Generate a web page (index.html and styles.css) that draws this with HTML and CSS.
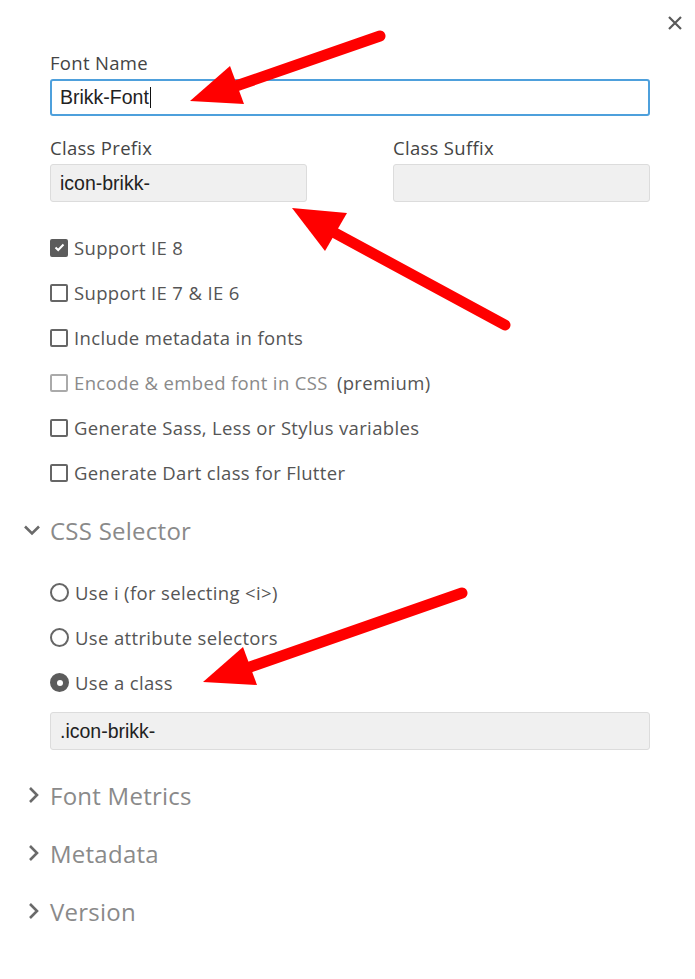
FILE: index.html
```html
<!DOCTYPE html>
<html>
<head>
<meta charset="utf-8">
<link rel="stylesheet" href="styles.css">
</head>
<body>
<div class="dialog">
  <button class="close" aria-label="Close">
    <svg width="16" height="16" viewBox="0 0 16 16"><path d="M2 2L14 14M14 2L2 14" stroke="#5a5a5a" stroke-width="2.2" fill="none"/></svg>
  </button>

  <div class="field">
    <label class="label">Font Name</label>
    <div class="input focus"><span>Brikk-Font</span><span class="caret"></span></div>
  </div>

  <div class="row2">
    <div class="field">
      <label class="label">Class Prefix</label>
      <div class="input">icon-brikk-</div>
    </div>
    <div class="field">
      <label class="label">Class Suffix</label>
      <div class="input"></div>
    </div>
  </div>

  <ul class="checks">
    <li class="opt"><span class="box checked"><svg width="11" height="9" viewBox="0 0 11 9"><path d="M1.5 4.5L4.2 7L9.5 1.5" stroke="#fff" stroke-width="2" fill="none"/></svg></span>Support IE 8</li>
    <li class="opt"><span class="box"></span>Support IE 7 &amp; IE 6</li>
    <li class="opt"><span class="box"></span>Include metadata in fonts</li>
    <li class="opt disabled"><span class="box"></span>Encode &amp; embed font in CSS <span class="premium">(premium)</span></li>
    <li class="opt"><span class="box"></span>Generate Sass, Less or Stylus variables</li>
    <li class="opt"><span class="box"></span>Generate Dart class for Flutter</li>
  </ul>

  <section class="acc open">
    <div class="acc-head">
      <svg class="chev down" width="18" height="12" viewBox="0 0 18 12"><path d="M2 2.5L9 9.5L16 2.5" stroke="#6a6a6a" stroke-width="2.6" fill="none"/></svg>
      <span>CSS Selector</span>
    </div>
    <ul class="radios">
      <li class="opt"><span class="radio"></span>Use i (for selecting &lt;i&gt;)</li>
      <li class="opt"><span class="radio"></span>Use attribute selectors</li>
      <li class="opt"><span class="radio on"></span>Use a class</li>
    </ul>
    <div class="input">.icon-brikk-</div>
  </section>

  <section class="acc">
    <div class="acc-head">
      <svg class="chev right" width="14" height="18" viewBox="0 0 14 18"><path d="M3 2L10 9L3 16" stroke="#6a6a6a" stroke-width="2.6" fill="none"/></svg>
      <span>Font Metrics</span>
    </div>
  </section>
  <section class="acc">
    <div class="acc-head">
      <svg class="chev right" width="14" height="18" viewBox="0 0 14 18"><path d="M3 2L10 9L3 16" stroke="#6a6a6a" stroke-width="2.6" fill="none"/></svg>
      <span>Metadata</span>
    </div>
  </section>
  <section class="acc">
    <div class="acc-head">
      <svg class="chev right" width="14" height="18" viewBox="0 0 14 18"><path d="M3 2L10 9L3 16" stroke="#6a6a6a" stroke-width="2.6" fill="none"/></svg>
      <span>Version</span>
    </div>
  </section>

  <svg class="arrows" width="695" height="979" viewBox="0 0 695 979">
    <g stroke="#ff0000" stroke-width="11" stroke-linecap="round" fill="none">
      <line x1="380" y1="36" x2="236" y2="86"/>
      <line x1="505" y1="325" x2="335" y2="233"/>
      <line x1="462" y1="593" x2="250" y2="667"/>
    </g>
    <g fill="#ff0000">
      <polygon points="190,101 230,66 244,104"/>
      <polygon points="292,208 347,213 325,251"/>
      <polygon points="203,682 243,647 257,685"/>
    </g>
  </svg>
</div>
</body>
</html>
```

FILE: styles.css
```css
* { box-sizing: border-box; }
html, body { margin: 0; padding: 0; background: #fff; }
body { width: 695px; height: 979px; overflow: hidden; }

.dialog {
  position: relative;
  width: 695px;
  height: 979px;
  padding: 52px 45px 0 50px;
  font-family: "Open Sans", "Noto Sans", sans-serif;
  color: #555;
}

.close {
  position: absolute;
  top: 14px;
  right: 11px;
  width: 18px;
  height: 18px;
  padding: 0;
  border: 0;
  background: none;
  display: flex;
  align-items: center;
  justify-content: center;
}

.field { display: flex; flex-direction: column; }
.label {
  font-size: 18.5px;
  letter-spacing: 0.3px;
  line-height: 22px;
  color: #444;
  margin-bottom: 5px;
}

.input {
  height: 38px;
  border: 1px solid #dcdcdc;
  border-radius: 3px;
  background: #f0f0f0;
  font-family: "Liberation Sans", Arial, sans-serif;
  font-size: 19.5px;
  color: #222;
  padding: 0 9px;
  display: flex;
  align-items: center;
}
.input.focus {
  height: 37px;
  background: #fff;
  border: 2px solid #4ea0dc;
  padding: 0 8px;
}
.caret {
  display: inline-block;
  width: 1px;
  height: 21px;
  background: #111;
  margin-left: 1px;
}

.row2 {
  display: grid;
  grid-template-columns: 257px 257px;
  justify-content: space-between;
  margin-top: 21px;
}

.checks, .radios { list-style: none; margin: 0; padding: 0; }
.checks { margin-top: 23px; }

.opt {
  height: 45px;
  display: flex;
  align-items: center;
  font-size: 18.5px;
  letter-spacing: 0.35px;
  color: #555;
  white-space: pre;
}
.opt.disabled { color: #8a8a8a; }
.opt .premium { color: #555; margin-left: 4px; }

.box {
  width: 18px;
  height: 18px;
  border: 2px solid #666;
  border-radius: 2px;
  margin-right: 6px;
  display: flex;
  align-items: center;
  justify-content: center;
  flex: none;
}
.opt.disabled .box { border-color: #aaa; }
.box.checked { background: #5c5c5c; border-color: #5c5c5c; }

.acc-head {
  position: relative;
  height: 40px;
  display: flex;
  align-items: center;
  font-size: 24px;
  letter-spacing: 0.25px;
  color: #8a8a8a;
}
.chev { position: absolute; top: 50%; transform: translateY(-50%); }
.chev.down { left: -27px; }
.chev.right { left: -23px; }
.acc.open { margin-top: 15px; }
.acc { margin-top: 18px; }
.acc.open + .acc { margin-top: 25px; }

.radios { margin-top: 20px; margin-bottom: 7px; }
.radio {
  width: 19px;
  height: 19px;
  border: 2px solid #666;
  border-radius: 50%;
  margin-right: 6px;
  flex: none;
  display: flex;
  align-items: center;
  justify-content: center;
}
.radio.on { background: #5c5c5c; border-color: #5c5c5c; }
.radio.on::after {
  content: "";
  width: 6px;
  height: 6px;
  border-radius: 50%;
  background: #fff;
}

.arrows {
  position: absolute;
  left: 0;
  top: 0;
  pointer-events: none;
}
```
